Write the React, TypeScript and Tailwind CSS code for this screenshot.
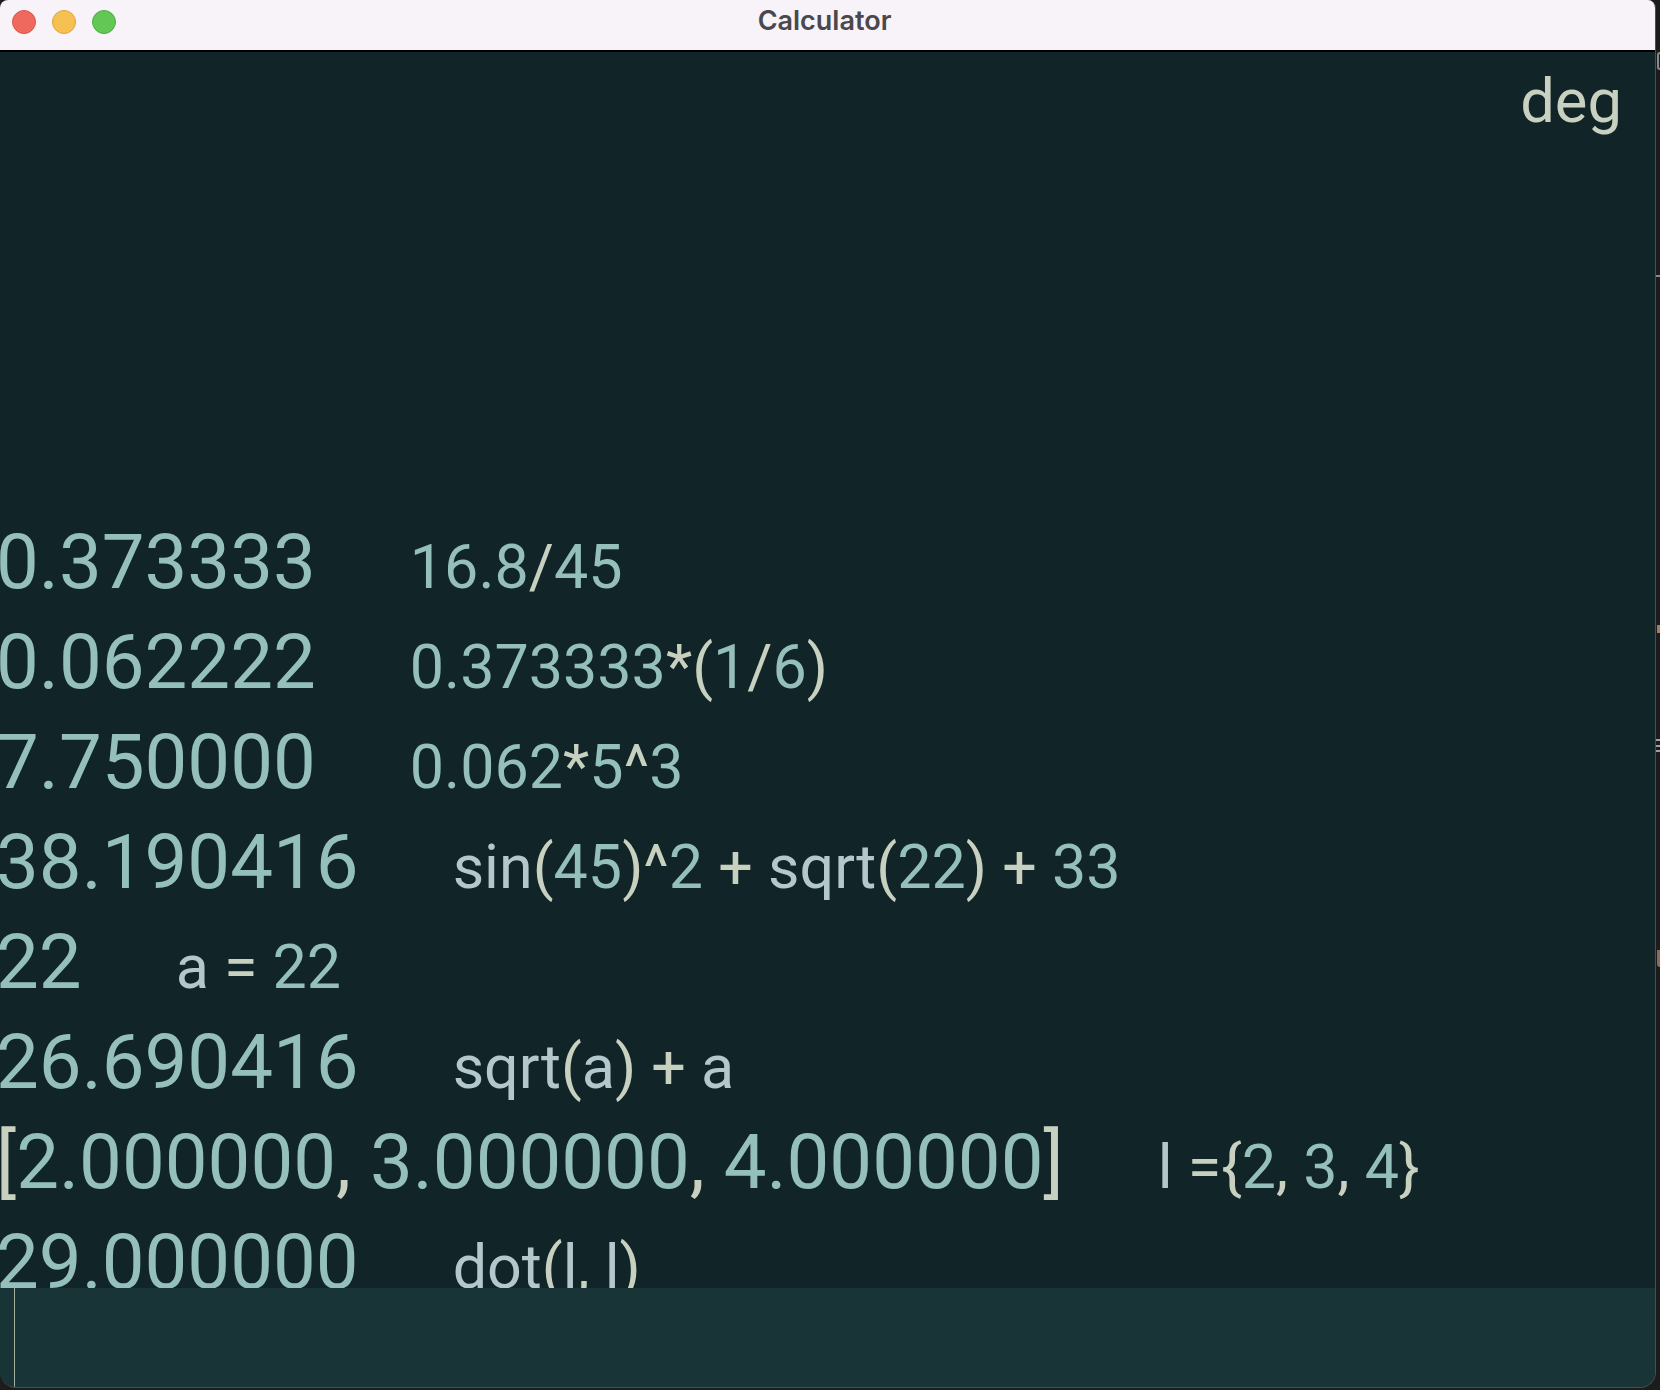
type Kind = 'n' | 'i' | 'o';
type Token = [string, Kind];

const tokenColors: Record<Kind, string> = {
  n: 'text-[#94bfbb]',
  i: 'text-[#b3c8cc]',
  o: 'text-[#c8d0c0]',
};

const history: { result: Token[]; expr: Token[] }[] = [
  {
    result: [['0.373333', 'n']],
    expr: [['16.8', 'n'], ['/', 'o'], ['45', 'n']],
  },
  {
    result: [['0.062222', 'n']],
    expr: [['0.373333', 'n'], ['*(', 'o'], ['1', 'n'], ['/', 'o'], ['6', 'n'], [')', 'o']],
  },
  {
    result: [['7.750000', 'n']],
    expr: [['0.062', 'n'], ['*', 'o'], ['5', 'n'], ['^', 'o'], ['3', 'n']],
  },
  {
    result: [['38.190416', 'n']],
    expr: [
      ['sin', 'i'], ['(', 'o'], ['45', 'n'], [')^', 'o'], ['2', 'n'], [' + ', 'o'],
      ['sqrt', 'i'], ['(', 'o'], ['22', 'n'], [') + ', 'o'], ['33', 'n'],
    ],
  },
  {
    result: [['22', 'n']],
    expr: [['a', 'i'], [' = ', 'o'], ['22', 'n']],
  },
  {
    result: [['26.690416', 'n']],
    expr: [['sqrt', 'i'], ['(', 'o'], ['a', 'i'], [') + ', 'o'], ['a', 'i']],
  },
  {
    result: [
      ['[', 'o'], ['2.000000', 'n'], [', ', 'o'], ['3.000000', 'n'], [', ', 'o'],
      ['4.000000', 'n'], [']', 'o'],
    ],
    expr: [['l', 'i'], [' ={', 'o'], ['2', 'n'], [', ', 'o'], ['3', 'n'], [', ', 'o'], ['4', 'n'], ['}', 'o']],
  },
  {
    result: [['29.000000', 'n']],
    expr: [['dot', 'i'], ['(', 'o'], ['l', 'i'], [', ', 'o'], ['l', 'i'], [')', 'o']],
  },
];

function Tokens({ tokens }: { tokens: Token[] }) {
  return (
    <>
      {tokens.map(([text, kind], i) => (
        <span key={i} className={tokenColors[kind]}>
          {text}
        </span>
      ))}
    </>
  );
}

export default function App() {
  return (
    <div className="relative h-[1390px] w-[1660px] overflow-hidden bg-[#1c1c1c] font-['Roboto',sans-serif]">
      {/* bits of the window behind */}
      <div className="absolute right-0 top-[52px] h-[18px] w-[3px] rounded-l-full border-y-2 border-l-2 border-[#8a8a8a]" />
      <div className="absolute right-0 top-[275px] h-[2px] w-[4px] bg-[#8a8a8a]" />
      <div className="absolute right-0 top-[625px] h-[8px] w-[3px] bg-[#a87a68]" />
      <div className="absolute right-0 top-[739px] h-[2px] w-[4px] bg-[#a0a0a0]" />
      <div className="absolute right-0 top-[745px] h-[2px] w-[4px] bg-[#a0a0a0]" />
      <div className="absolute right-0 top-[750px] h-[2px] w-[4px] bg-[#a0a0a0]" />
      <div className="absolute right-0 top-[950px] h-[17px] w-[3px] rounded-bl-sm bg-[#8f6a5a]" />

      <div className="flex h-[1388px] w-[1656px] flex-col overflow-hidden rounded-t-[8px] rounded-b-[16px] border-r border-b border-[#4a4f50] bg-[#112427]">
        <div className="relative flex h-[50px] shrink-0 items-center bg-[#f7f3f8] pb-[6px] pl-3">
          <div className="flex gap-4">
            <div className="h-6 w-6 rounded-full border border-[#d9564c] bg-[#f0695f]" />
            <div className="h-6 w-6 rounded-full border border-[#dca63c] bg-[#f7c052]" />
            <div className="h-6 w-6 rounded-full border border-[#4fae44] bg-[#62c755]" />
          </div>
          <div className="absolute inset-x-0 top-0 pr-[6px] text-center font-['Inter',sans-serif] text-[27px] font-semibold leading-[42px] text-[#4a484c]">
            Calculator
          </div>
        </div>
        <div className="h-[2px] shrink-0 bg-black" />

        <div className="min-h-0 flex-1 overflow-hidden">
          <div className="flex h-[100px] items-center justify-end pr-[33px] text-[61.5px] leading-none text-[#c8d0c0]">
            deg
          </div>
          <div className="-ml-1 pt-[360px]">
            {history.map((row, i) => (
              <div key={i} className="flex h-[100px] items-baseline gap-[94px] whitespace-pre leading-[100px]">
                <div className="text-[76.2px]">
                  <Tokens tokens={row.result} />
                </div>
                <div className="text-[61px]">
                  <Tokens tokens={row.expr} />
                </div>
              </div>
            ))}
          </div>
        </div>

        <div className="h-[99px] shrink-0 bg-[#183436] pl-[14px]">
          <div className="h-full w-px bg-[#a3b09e]" />
        </div>
      </div>
    </div>
  );
}
